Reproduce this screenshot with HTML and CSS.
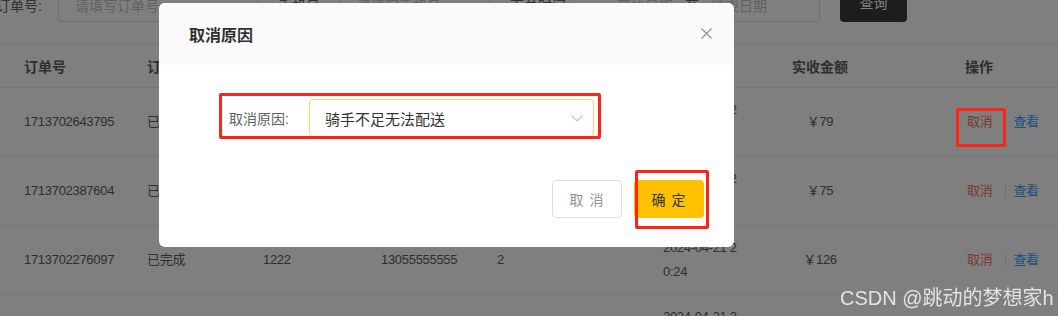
FILE: index.html
```html
<!DOCTYPE html>
<html lang="zh-CN">
<head>
    <meta charset="UTF-8">
    <meta name="viewport" content="width=device-width, initial-scale=1.0">
    <link rel="stylesheet" href="styles.css">
    <title>订单管理</title>
</head>
<body>

    <div class="page">
        <div class="search">
            <span class="search-label order-label">订单号:</span>
            <div class="input order-input">请填写订单号</div>
            <span class="search-label">手机号:</span>
            <div class="input phone-input">请填写手机号</div>
            <span class="search-label">下单时间:</span>
            <div class="input date-input">
                <span>开始日期</span>
                <span class="date-sep">至</span>
                <span>结束日期</span>
            </div>
            <button class="btn-query">查询</button>
        </div>

        <div class="table">
            <div class="tr th">
                <div class="td">订单号</div>
                <div class="td">订单状态</div>
                <div class="td">用户名</div>
                <div class="td">手机号</div>
                <div class="td">餐具数量</div>
                <div class="td">下单时间</div>
                <div class="td center">实收金额</div>
                <div class="td center">操作</div>
            </div>
            <div class="tr">
                <div class="td">1713702643795</div>
                <div class="td">已接单</div>
                <div class="td">1222</div>
                <div class="td">13055555555</div>
                <div class="td">2</div>
                <div class="td time">2024-04-21 20:30</div>
                <div class="td center">￥79</div>
                <div class="td ops"><a class="link-cancel">取消</a><span class="ops-line"></span><a class="link-view">查看</a></div>
            </div>
            <div class="tr">
                <div class="td">1713702387604</div>
                <div class="td">已接单</div>
                <div class="td">1222</div>
                <div class="td">13055555555</div>
                <div class="td">2</div>
                <div class="td time">2024-04-21 20:26</div>
                <div class="td center">￥75</div>
                <div class="td ops"><a class="link-cancel">取消</a><span class="ops-line"></span><a class="link-view">查看</a></div>
            </div>
            <div class="tr">
                <div class="td">1713702276097</div>
                <div class="td">已完成</div>
                <div class="td">1222</div>
                <div class="td">13055555555</div>
                <div class="td">2</div>
                <div class="td time">2024-04-21 20:24</div>
                <div class="td center">￥126</div>
                <div class="td ops"><a class="link-cancel">取消</a><span class="ops-line"></span><a class="link-view">查看</a></div>
            </div>
            <div class="tr">
                <div class="td">1713702101352</div>
                <div class="td">已完成</div>
                <div class="td">1222</div>
                <div class="td">13055555555</div>
                <div class="td">2</div>
                <div class="td time">2024-04-21 20:21</div>
                <div class="td center">￥58</div>
                <div class="td ops"><a class="link-cancel">取消</a><span class="ops-line"></span><a class="link-view">查看</a></div>
            </div>
        </div>
    </div>

    <div class="mask"></div>

    <div class="dialog">
        <div class="dialog-header">
            <span class="dialog-title">取消原因</span>
            <svg class="dialog-close" width="11" height="11" viewBox="0 0 11 11">
                <path d="M0.5 0.5 L10.5 10.5 M10.5 0.5 L0.5 10.5" stroke="#909399" stroke-width="1.2" fill="none"/>
            </svg>
        </div>
        <div class="dialog-body">
            <div class="form-item">
                <label class="form-label">取消原因:</label>
                <div class="select">
                    <span>骑手不足无法配送</span>
                    <svg width="12" height="7" viewBox="0 0 12 7">
                        <path d="M0.5 0.5 L6 6 L11.5 0.5" stroke="#c0c4cc" stroke-width="1.1" fill="none"/>
                    </svg>
                </div>
            </div>
        </div>
        <div class="dialog-footer">
            <button class="btn btn-default">取 消</button>
            <button class="btn btn-primary">确 定</button>
        </div>
    </div>

    <div class="mark mark-reason"></div>
    <div class="mark mark-ok"></div>
    <div class="mark mark-op"></div>

    <div class="watermark">CSDN @跳动的梦想家h</div>

</body>
</html>
```

FILE: styles.css
```css
*{
    margin: 0;
    padding: 0;
    box-sizing: border-box;
}
html, body{
    height: 100%;
}
body{
    font-family: "Liberation Sans", "Noto Sans CJK SC", sans-serif;
    background: #fff;
    color: #606266;
    overflow: hidden;
}

/* search bar, scrolled half out of view */
.search{
    display: flex;
    align-items: center;
    height: 34px;
    margin-top: -12px;
}
.search-label{
    font-size: 14px;
    color: #606266;
    width: 62px;
    flex: none;
}
.order-label{
    margin-left: -4px;
}
.input{
    height: 34px;
    border: 1px solid #dcdfe6;
    border-radius: 4px;
    padding: 0 16px;
    font-size: 14px;
    color: #c0c4cc;
    display: flex;
    align-items: center;
    flex: none;
}
.order-input{
    width: 200px;
    margin-right: 20px;
}
.phone-input{
    width: 150px;
    margin-right: 20px;
}
.date-input{
    width: 250px;
    margin-left: -2px;
    padding-right: 52px;
    justify-content: flex-end;
}
.date-sep{
    color: #606266;
    margin: 0 12px;
}
.btn-query{
    align-self: flex-end;
    margin-left: 20px;
    width: 67px;
    height: 40px;
    border: none;
    border-radius: 4px;
    background: #3a3a3a;
    color: #fff;
    font-size: 14px;
    font-family: inherit;
}

/* table */
.table{
    margin-top: 21px;
    border-top: 1px solid #ebeef5;
}
.tr{
    display: grid;
    grid-template-columns: 123px 116px 118px 116px 166px 101px 160px 158px;
    border-bottom: 1px solid #ebeef5;
}
.td{
    display: flex;
    align-items: center;
    padding: 10px 0 10px 24px;
    font-size: 13px;
    letter-spacing: -0.3px;
    line-height: 24px;
    color: #5a5c60;
}
.th .td{
    height: 43px;
    padding-top: 3px;
    padding-bottom: 0;
    font-size: 14px;
    font-weight: bold;
    letter-spacing: 0;
}
.td.center{
    justify-content: center;
    padding-left: 0;
}
.td.time{
    word-break: break-all;
}
.td.ops{
    padding-left: 67px;
}
.link-cancel{
    color: #f56c6c;
    margin-right: 13px;
}
.ops-line{
    width: 1px;
    height: 14px;
    background: #dcdfe6;
    margin-right: 7px;
}
.link-view{
    color: #409eff;
}

/* modal */
.mask{
    position: fixed;
    top: 0;
    left: 0;
    width: 100%;
    height: 100%;
    background: rgba(0, 0, 0, .5);
}
.dialog{
    position: absolute;
    top: 3px;
    left: 159px;
    width: 575px;
    height: 244px;
    background: #fff;
    border-radius: 6px;
    overflow: hidden;
}
.dialog-header{
    height: 62px;
    background: #fafafa;
    display: flex;
    justify-content: space-between;
    padding: 0 22px 0 30px;
}
.dialog-title{
    font-size: 16px;
    font-weight: bold;
    color: #303133;
    line-height: 20px;
    margin-top: 23px;
}
.dialog-close{
    margin-top: 25px;
}
.dialog-body{
    padding: 34px 0 0 70px;
}
.form-item{
    display: flex;
    align-items: center;
    height: 38px;
}
.form-label{
    width: 80px;
    font-size: 14px;
    color: #606266;
}
.select{
    width: 285px;
    height: 38px;
    border: 1px solid #f7d46e;
    border-radius: 4px;
    display: flex;
    align-items: center;
    justify-content: space-between;
    padding: 0 10px 0 15px;
    font-size: 15px;
    color: #333;
}
.dialog-footer{
    display: flex;
    justify-content: flex-end;
    gap: 12px;
    margin-top: 43px;
    padding-right: 30px;
}
.btn{
    width: 70px;
    height: 38px;
    border-radius: 4px;
    font-size: 14px;
    font-family: inherit;
    letter-spacing: 1px;
}
.btn-default{
    background: #fff;
    border: 1px solid #dcdfe6;
    color: #909399;
}
.btn-primary{
    background: #ffc100;
    border: 1px solid #ffc100;
    color: #333;
}

/* red annotation boxes drawn over the screenshot */
.mark{
    position: absolute;
    border: 3px solid #ff2419;
    border-radius: 2px;
}
.mark-reason{
    left: 219px;
    top: 93px;
    width: 382px;
    height: 46px;
}
.mark-ok{
    left: 635px;
    top: 170px;
    width: 74px;
    height: 59px;
}
.mark-op{
    left: 956px;
    top: 108px;
    width: 50px;
    height: 39px;
}

.watermark{
    position: absolute;
    left: 840px;
    top: 288px;
    font-size: 20px;
    line-height: 20px;
    color: rgba(255, 255, 255, .78);
    white-space: nowrap;
}
```
